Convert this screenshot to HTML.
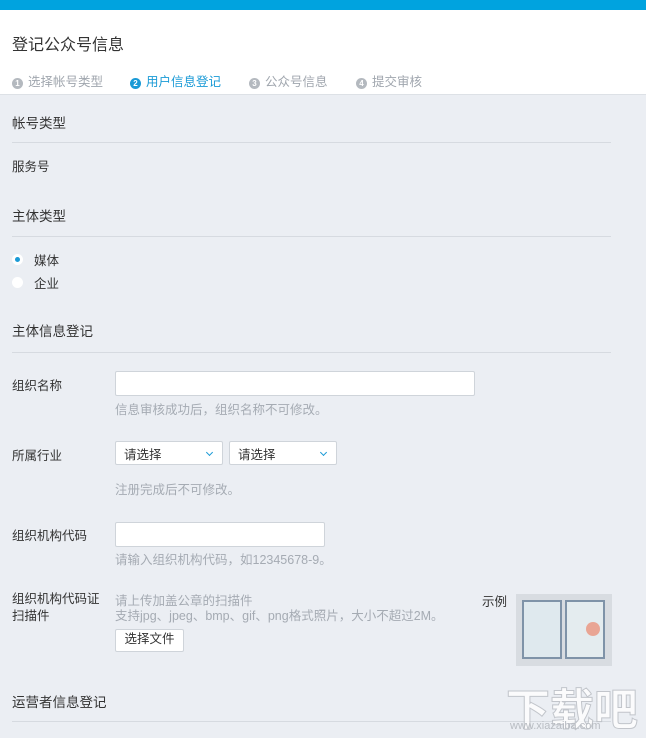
<!DOCTYPE html>
<html><head><meta charset="utf-8"><style>
*{margin:0;padding:0;box-sizing:border-box}
body{width:646px;height:738px;overflow:hidden;background:#ebeef3;font-family:"Liberation Sans","Noto Sans CJK SC",sans-serif;font-size:12.5px;color:#333;position:relative}
.a{position:absolute;white-space:nowrap}
.bar{position:absolute;left:0;top:0;width:646px;height:10px;background:#00a3df}
.hd{position:absolute;left:0;top:10px;width:646px;height:85px;background:#fff;border-bottom:1px solid #dde1e6}
.line{position:absolute;left:12px;width:599px;height:1px;background:#d6dae0}
.g{color:#a5abb3}
.st{color:#a0a6ae;font-size:12.5px}
.num{display:inline-block;width:11px;height:11px;border-radius:50%;background:#b4b9bf;color:#fff;font-size:8px;line-height:11px;text-align:center;margin-right:5px;vertical-align:0px;font-weight:bold}
.in{position:absolute;background:#fff;border:1px solid #cfd4da;border-radius:2px}
.sel{position:absolute;background:#fff;border:1px solid #cfd4da;border-radius:2px;padding:2px 0 0 8px}
.sel:after{content:"";position:absolute;right:10px;top:8px;width:4px;height:4px;border-right:1.5px solid #1a9ad6;border-bottom:1.5px solid #1a9ad6;transform:rotate(45deg)}
</style></head><body>
<div class="bar"></div>
<div class="hd"></div>
<div class="a" style="left:12px;top:31px;font-size:16px;color:#333">登记公众号信息</div>
<div class="a st" style="left:12px;top:71px"><span class="num">1</span>选择帐号类型</div>
<div class="a st" style="left:130px;top:71px;color:#1a9ad6"><span class="num" style="background:#1a9ad6">2</span>用户信息登记</div>
<div class="a st" style="left:249px;top:71px"><span class="num">3</span>公众号信息</div>
<div class="a st" style="left:356px;top:71px"><span class="num">4</span>提交审核</div>

<div class="a" style="left:12px;top:112px;font-size:13.5px">帐号类型</div>
<div class="line" style="top:142px"></div>
<div class="a" style="left:12px;top:156px">服务号</div>
<div class="a" style="left:12px;top:205px;font-size:13.5px">主体类型</div>
<div class="line" style="top:236px"></div>
<div class="a" style="left:12px;top:254px;width:11px;height:11px;border-radius:50%;background:#fff"><div style="position:absolute;left:3px;top:3px;width:5px;height:5px;border-radius:50%;background:#1a9ad6"></div></div>
<div class="a" style="left:34px;top:250px">媒体</div>
<div class="a" style="left:12px;top:277px;width:11px;height:11px;border-radius:50%;background:#fff"></div>
<div class="a" style="left:34px;top:273px">企业</div>
<div class="a" style="left:12px;top:320px;font-size:13.5px">主体信息登记</div>
<div class="line" style="top:352px"></div>

<div class="a" style="left:12px;top:375px">组织名称</div>
<div class="in" style="left:115px;top:371px;width:360px;height:25px"></div>
<div class="a g" style="left:115px;top:399px">信息审核成功后，组织名称不可修改。</div>

<div class="a" style="left:12px;top:445px">所属行业</div>
<div class="sel" style="left:115px;top:441px;width:108px;height:24px">请选择</div>
<div class="sel" style="left:229px;top:441px;width:108px;height:24px">请选择</div>
<div class="a g" style="left:115px;top:479px">注册完成后不可修改。</div>

<div class="a" style="left:12px;top:525px">组织机构代码</div>
<div class="in" style="left:115px;top:522px;width:210px;height:25px"></div>
<div class="a g" style="left:115px;top:549px">请输入组织机构代码，如12345678-9。</div>

<div class="a" style="left:12px;top:591px;line-height:17px">组织机构代码证<br>扫描件</div>
<div class="a g" style="left:115px;top:590px">请上传加盖公章的扫描件</div>
<div class="a g" style="left:115px;top:605px">支持jpg、jpeg、bmp、gif、png格式照片，大小不超过2M。</div>
<div class="a" style="left:115px;top:629px;width:69px;height:23px;background:#fff;border:1px solid #cfd4da;border-radius:2px;text-align:center;line-height:19px">选择文件</div>
<div class="a" style="left:482px;top:591px">示例</div>
<div class="a" style="left:516px;top:594px;width:96px;height:72px;background:#d8dce1">
<div style="position:absolute;left:6px;top:6px;width:40px;height:59px;background:#dfe9ee;border:2px solid #7f93a8"></div>
<div style="position:absolute;left:49px;top:6px;width:40px;height:59px;background:#e4ecef;border:2px solid #7f93a8"></div>
<div style="position:absolute;left:70px;top:28px;width:14px;height:14px;border-radius:50%;background:#e9a594"></div>
</div>
<div class="a" style="left:12px;top:691px;font-size:13.5px">运营者信息登记</div>
<div class="line" style="top:721px"></div>
<div class="a" style="left:506px;top:674px;font-size:44px;color:#fff;opacity:.8;-webkit-text-stroke:1px #b8bcc2;font-weight:bold">下载吧</div>
<div class="a" style="left:510px;top:720px;font-size:11px;color:#b8bcc2">www.xiazaiba.com</div>
</body></html>
